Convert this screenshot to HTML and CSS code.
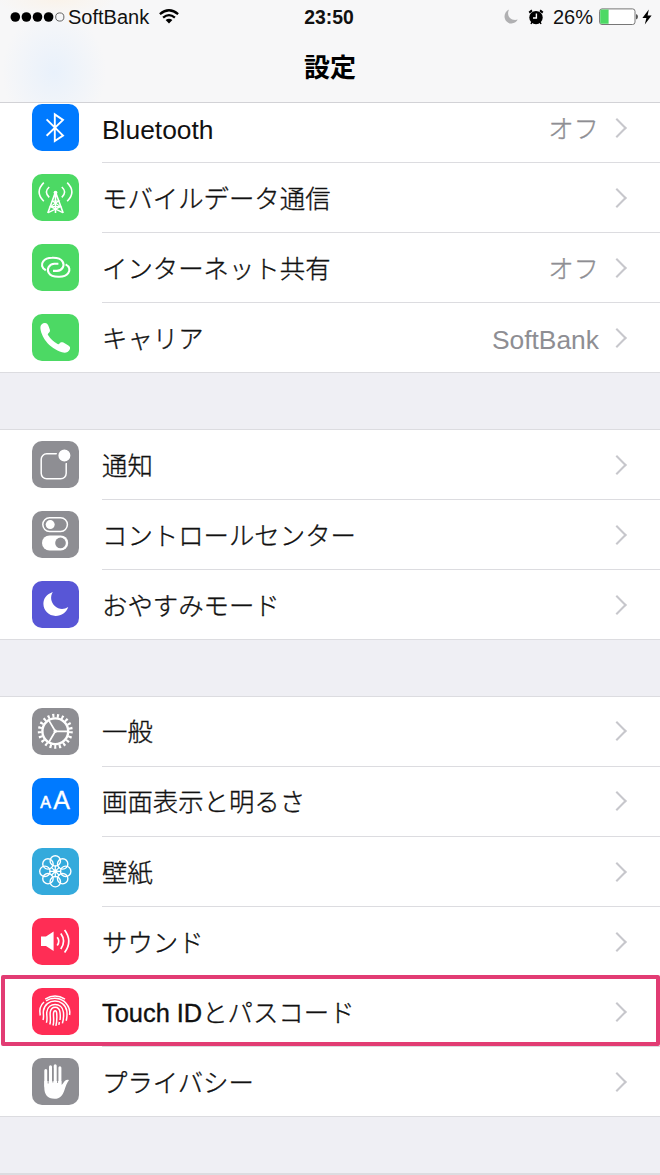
FILE: index.html
```html
<!DOCTYPE html>
<html lang="ja">
<head>
  <meta charset="utf-8">
  <title>設定</title>
  <link rel="stylesheet" href="styles.css">
</head>
<body>
  <header class="header">
    <div class="status-bar">
      <div class="status-left">
        <svg class="signal" width="56" height="12" viewBox="0 0 56 12">
          <circle cx="5.3" cy="6" r="4.8"/>
          <circle cx="16.4" cy="6" r="4.8"/>
          <circle cx="27.5" cy="6" r="4.8"/>
          <circle cx="38.6" cy="6" r="4.8"/>
          <circle cx="49.8" cy="6" r="4.1" fill="none" stroke="#555" stroke-width="0.9"/>
        </svg>
        <span class="carrier">SoftBank</span>
        <svg class="wifi" width="20" height="15" viewBox="0 0 20 15">
          <g fill="none" stroke="#000" stroke-width="2.3">
            <path d="M0.9 5.2 Q10 -2.6 19.1 5.2"/>
            <path d="M4.1 8.7 Q10 3.6 15.9 8.7"/>
          </g>
          <path d="M6.6 11 Q10 8.4 13.4 11 L10 14.6 Z"/>
        </svg>
      </div>
      <div class="time">23:50</div>
      <div class="status-right">
        <svg class="dnd" width="14" height="15" viewBox="0 0 14 15">
          <path fill="#b0b0b2" d="M5 0.4 C-2 3.5 -0.5 14.5 7.5 14.5 C10.5 14.5 12.7 12.8 13.7 10.6 C6.5 12.4 2 6.5 5 0.4 Z"/>
        </svg>
        <svg class="alarm" width="16" height="16" viewBox="0 0 16 16">
          <circle cx="8" cy="8.6" r="6.7"/>
          <path d="M1.2 3.6 L4 1.4 M14.8 3.6 L12 1.4" stroke="#000" stroke-width="2"/>
          <path d="M4 13 L3 15 M12 13 L13 15" stroke="#000" stroke-width="1.5"/>
          <path d="M8.4 4.4 V9 H5" fill="none" stroke="#fff" stroke-width="1.4"/>
        </svg>
        <span class="percent">26%</span>
        <svg class="battery" width="40" height="18" viewBox="0 0 40 18">
          <rect x="0.6" y="0.9" width="35.4" height="15.6" rx="2.4" fill="#fff" stroke="#777" stroke-width="1"/>
          <path fill="#4cd964" d="M2.5 1.6 H9.6 V15.8 H2.5 Q1.2 15.8 1.2 14.5 V2.9 Q1.2 1.6 2.5 1.6 Z"/>
          <path fill="#555" d="M37 6 Q39 6.6 39 8.7 Q39 10.8 37 11.4 Z"/>
        </svg>
        <svg class="bolt" width="10" height="16" viewBox="0 0 10 16">
          <path d="M6.8 0.5 L0.4 9 H4.4 L2.8 15.5 L9.6 6.5 H5.6 Z"/>
        </svg>
      </div>
    </div>
    <h1>設定</h1>
  </header>

  <main class="settings">
    <ul class="group">
      <li class="row">
        <svg class="icon blue" viewBox="0 0 47 47">
          <path class="line" stroke-width="1.9" d="M14.6 15.4 L31 31.6 L22.8 37 V10.4 L31 16 L14.6 31.8"/>
        </svg>
        <div class="cell"><span class="label latin">Bluetooth</span><span class="value">オフ</span><i class="chevron"></i></div>
      </li>
      <li class="row">
        <svg class="icon green" viewBox="0 0 47 47">
          <g class="line" stroke-width="1.6">
            <path d="M17.2 13 Q11.6 18 17.2 23.4 M29.8 13 Q35.4 18 29.8 23.4"/>
            <path d="M11.8 8.6 Q2.4 18 11.8 27.2 M35.2 8.6 Q44.6 18 35.2 27.2"/>
            <path d="M23.5 18 L15.8 39 M23.5 18 L31.2 39 M23.5 18 V39"/>
            <path stroke-width="1.2" d="M20.4 27 H26.6 L18.5 32.6 H28.5 L20.4 27 M18.5 32.6 L30.8 38.6 M28.5 32.6 L16.2 38.6"/>
          </g>
          <circle cx="23.5" cy="18.6" r="1.9" fill="#fff"/>
        </svg>
        <div class="cell"><span class="label">モバイルデータ通信</span><i class="chevron"></i></div>
      </li>
      <li class="row">
        <svg class="icon green" viewBox="0 0 47 47">
          <g class="line" stroke-width="2.1">
            <path d="M13.8 26.2 C9.4 24 9.2 20 11.2 17.4 C13.6 14.2 17 13.8 20 13.8 C25 13.6 28.6 14.4 30.6 17.6 C33 21.6 30.4 26.6 25 26.9 H21"/>
            <path d="M33.6 20.4 C38 22.6 38.2 26.6 36.2 29.2 C33.8 32.4 30.4 32.8 27.4 32.8 C22.4 33 18.8 32.2 16.8 29 C14.4 25 17 20 22.4 19.7 H26.4"/>
          </g>
        </svg>
        <div class="cell"><span class="label">インターネット共有</span><span class="value">オフ</span><i class="chevron"></i></div>
      </li>
      <li class="row">
        <svg class="icon green" viewBox="0 0 47 47">
          <path fill="#fff" d="M8.4 13 C8.6 10.6 10.4 9.2 12.8 9 C14.6 8.9 15.8 10 16.4 11.8 L17.8 15.6 C18.4 17.4 17.6 18.6 16.2 19.4 C15.6 19.9 15.8 20.6 16.2 21.3 C18.6 25.2 21.8 28 25.6 30 C26.4 30.4 27 30.2 27.5 29.6 C28.4 28.2 29.8 27.8 31.4 28.6 L36 31.2 C38.2 32.5 38.6 34 37.6 35.8 C36 38.6 33 39.2 30 38.2 C24 36.4 18 32.4 14 27.2 C11 23.2 8.2 17.6 8.4 13 Z"/>
        </svg>
        <div class="cell"><span class="label">キャリア</span><span class="value latin">SoftBank</span><i class="chevron"></i></div>
      </li>
    </ul>

    <ul class="group">
      <li class="row">
        <svg class="icon gray" viewBox="0 0 47 47">
          <rect class="line" stroke-width="1.5" x="9.2" y="12.8" width="25" height="25" rx="5.5"/>
          <circle cx="32.4" cy="14.4" r="7" fill="#fff" stroke="#8e8e93" stroke-width="2"/>
        </svg>
        <div class="cell"><span class="label">通知</span><i class="chevron"></i></div>
      </li>
      <li class="row">
        <svg class="icon gray" viewBox="0 0 47 47">
          <rect class="line" stroke-width="1.5" x="10.8" y="6.8" width="24.6" height="13.6" rx="6.8"/>
          <circle cx="18.2" cy="13.6" r="4.5" fill="#fff"/>
          <rect x="10" y="24.4" width="26.2" height="15" rx="7.5" fill="#fff"/>
          <circle cx="28.5" cy="31.9" r="5.3" fill="#8e8e93"/>
        </svg>
        <div class="cell"><span class="label">コントロールセンター</span><i class="chevron"></i></div>
      </li>
      <li class="row">
        <svg class="icon purple" viewBox="0 0 47 47">
          <path fill="#fff" d="M20.8 11 C14.6 13.2 11.4 17.6 11.4 22.8 C11.4 29.6 16.8 34.9 23.6 34.9 C29.6 34.9 34.4 31.4 36.2 26 C32 28.8 26.6 28.6 22.8 25 C18.8 21.2 18 15.6 20.8 11 Z"/>
        </svg>
        <div class="cell"><span class="label">おやすみモード</span><i class="chevron"></i></div>
      </li>
    </ul>

    <ul class="group">
      <li class="row">
        <svg class="icon gray" viewBox="0 0 47 47">
          <g class="line">
            <circle cx="23.3" cy="23.3" r="12.9" stroke-width="2.4"/>
            <circle cx="23.3" cy="23.3" r="15.6" stroke-width="3.8" stroke-dasharray="2.1 2.567"/>
            <path stroke-width="1.7" d="M23.3 23.3 H35.5 M23.3 23.3 L17 12.6 M23.3 23.3 L17 34"/>
          </g>
          <circle cx="23.3" cy="23.3" r="1.7" fill="#fff"/>
        </svg>
        <div class="cell"><span class="label">一般</span><i class="chevron"></i></div>
      </li>
      <li class="row">
        <svg class="icon blue" viewBox="0 0 47 47">
          <text class="glyph small" x="8.2" y="29.8">A</text>
          <text class="glyph" x="21.2" y="31.4">A</text>
        </svg>
        <div class="cell"><span class="label">画面表示と明るさ</span><i class="chevron"></i></div>
      </li>
      <li class="row">
        <svg class="icon cyan" viewBox="0 0 47 47">
          <g class="line" stroke-width="1.4" transform="translate(23.3 23.3)">
            <g id="petals">
              <circle cy="-10.4" r="5.2"/>
              <circle cx="10.4" r="5.2"/>
              <circle cy="10.4" r="5.2"/>
              <circle cx="-10.4" r="5.2"/>
              <path stroke-width="1.2" d="M0 -2 V-6 M2 0 H6 M0 2 V6 M-2 0 H-6"/>
            </g>
            <use href="#petals" transform="rotate(45)"/>
          </g>
          <circle cx="23.3" cy="23.3" r="2.3" fill="#fff"/>
        </svg>
        <div class="cell"><span class="label">壁紙</span><i class="chevron"></i></div>
      </li>
      <li class="row">
        <svg class="icon red" viewBox="0 0 47 47">
          <path fill="#fff" d="M9 18.6 H14 L21.6 13.6 V33 L14 28 H9 Z"/>
          <g class="line" stroke-width="1.7">
            <path d="M25.2 19.2 Q28.4 23.2 25.2 27.4"/>
            <path d="M28.8 15.6 Q34.4 23.2 28.8 31"/>
            <path d="M32.6 12 Q41 23.2 32.6 34.6"/>
          </g>
        </svg>
        <div class="cell"><span class="label">サウンド</span><i class="chevron"></i></div>
      </li>
      <li class="row highlight">
        <svg class="icon red" viewBox="0 0 47 47">
          <g class="line" stroke-width="1.5">
            <path d="M13.2 11.2 Q23 4.8 33 11.2"/>
            <path d="M8.2 27.5 C7 21.5 8.6 17 12 14 M14 12.8 C21 8.6 29.6 10 34 15.2 C37.6 19.4 38.2 23.6 37.6 27"/>
            <path d="M11 32 C12.2 29 11 26 11.4 23 C13 9.8 32.8 9.8 34.8 23 C35.2 26.4 35 29.6 34.2 32.8"/>
            <path d="M14.4 34.8 C15.8 31 14.4 27 14.8 24 C16 14 30.2 14 31.4 24 C31.9 28.5 31.4 32 30.4 35.4"/>
            <path d="M17.8 36.6 C19.2 32.5 17.8 28 18.2 24.4 C19.2 17.4 27.2 17.4 28 24.4 C28.4 27.4 28.4 29.6 28 32 M27.4 34 L26.8 36.8"/>
            <path d="M21 37.6 C22.4 33.5 21.2 28.6 21.5 25.2 C21.9 22 24.4 22 24.7 25.2 C25.1 30 24.9 33.6 23.9 37.8"/>
          </g>
        </svg>
        <div class="cell"><span class="label">Touch IDとパスコード</span><i class="chevron"></i></div>
      </li>
      <li class="row">
        <svg class="icon gray" viewBox="0 0 47 47">
          <g class="line" stroke-width="3" stroke-linecap="round">
            <path d="M13.8 12.4 V28 M18.5 8.8 V26 M23.2 7.8 V26 M27.9 9.8 V27"/>
          </g>
          <path fill="#fff" d="M12.3 23 H29.4 V27 C30.8 26.6 31.4 24.2 33 22.8 C34.4 21.7 36.2 21.6 36.9 22.3 C35 24.5 33.8 28.4 32.4 32.2 C30.8 37.4 27.8 40.8 22.6 40.8 C15.4 40.8 12.3 36.4 12.3 29.5 Z"/>
          <path stroke="#8e8e93" stroke-width="0.9" d="M16.15 12 V25.5 M20.85 10 V24.5 M25.55 10 V25"/>
        </svg>
        <div class="cell"><span class="label">プライバシー</span><i class="chevron"></i></div>
      </li>
    </ul>

    <ul class="group"></ul>
  </main>
</body>
</html>
```

FILE: styles.css
```css
*,
*::after {
  box-sizing: border-box;
}

body {
  width: 660px;
  height: 1175px;
  margin: 0;
  overflow: hidden;
  background: #efeff4;
  color: #111;
  font-family: "Liberation Sans", "Noto Sans CJK JP", sans-serif;
}

/* Navigation bar */
.header {
  position: relative;
  z-index: 1;
  height: 103px;
  border-bottom: 1px solid #d2d2d6;
  background:
    radial-gradient(ellipse 52px 62px at 54px 72px, #e9f1fb, rgba(233, 241, 251, 0)),
    radial-gradient(ellipse 60px 16px at 56px 0, #faf3ea, rgba(250, 243, 234, 0)),
    #f7f7f8;
}

.status-bar {
  display: grid;
  grid-template-columns: 1fr auto 1fr;
  align-items: center;
  height: 33px;
  padding: 0 8px 0 10px;
}

.status-left,
.status-right {
  display: flex;
  align-items: center;
}

.status-right {
  justify-content: flex-end;
}

.carrier {
  margin-left: 2px;
  font-size: 20px;
}

.carrier,
.time,
.percent {
  padding-top: 1px;
}

.wifi {
  margin-left: 10px;
}

.time {
  margin-right: 4px;
  font-size: 19.4px;
  font-weight: bold;
}

.alarm {
  margin-left: 10px;
  margin-right: 1px;
}

.percent {
  margin-left: 8px;
  font-size: 20px;
}

.battery {
  margin-left: 6px;
}

.bolt {
  margin-left: 3px;
}

.header h1 {
  margin: 15px 0 0;
  font-size: 26px;
  font-weight: bold;
  line-height: 40px;
  text-align: center;
  color: #000;
}

/* List */
.settings {
  display: flex;
  flex-direction: column;
  gap: 55.7px;
  margin-top: -11px;
}

.group {
  margin: 0;
  padding: 0;
  list-style: none;
  background: #fff;
  border-top: 1px solid #dcdce0;
  border-bottom: 1px solid #dcdce0;
}

.row {
  position: relative;
  display: flex;
  align-items: center;
  height: 70.1px;
  padding-left: 32px;
}

.row:last-child {
  height: 69px;
}

.icon {
  flex: none;
  width: 47px;
  height: 47px;
  margin-top: -1px;
  border-radius: 10px;
}

.icon .line {
  fill: none;
  stroke: #fff;
}

.icon .glyph {
  fill: #fff;
  font-size: 25px;
  stroke: #fff;
  stroke-width: 0.3px;
}

.icon .small {
  font-size: 16px;
  stroke-width: 0.6px;
}

.blue { background: #007aff; }
.green { background: #4cd964; }
.gray { background: #8e8e93; }
.purple { background: #5856d6; }
.cyan { background: #34aadc; }
.red { background: #ff2d55; }

.cell {
  flex: 1;
  display: flex;
  align-items: center;
  align-self: stretch;
  margin-left: 23px;
  padding-right: 33px;
  border-bottom: 1px solid #dcdce0;
}

.row:last-child .cell {
  border-bottom: none;
}

.label,
.value {
  padding-top: 2px;
  font-size: 25.4px;
  font-weight: 300;
  line-height: 38px;
  white-space: nowrap;
  -webkit-text-stroke: 0.35px;
}

.label {
  flex: 1;
}

.value {
  color: #8e8e93;
}

.latin {
  padding-top: 4px;
  font-size: 26.4px;
  -webkit-text-stroke: 0;
}

.chevron {
  width: 14px;
  height: 14px;
  margin: 0 3px 0 11px;
  border-top: 2.5px solid #c7c7cc;
  border-right: 2.5px solid #c7c7cc;
  transform: rotate(45deg);
}

/* Callout frame around the Touch ID row */
.highlight::after {
  content: "";
  position: absolute;
  top: -2px;
  left: 1px;
  right: 0;
  height: 71px;
  border: 4px solid #e23c73;
  border-radius: 2px;
}
```
